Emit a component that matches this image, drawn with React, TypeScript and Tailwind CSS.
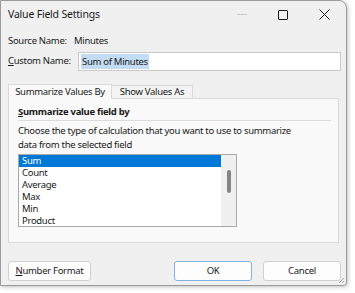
import React from 'react';

const font = { fontFamily: '"Segoe UI", "Noto Sans", sans-serif' };

export default function App() {
  const items = ['Sum', 'Count', 'Average', 'Max', 'Min', 'Product'];

  return (
    <div className="w-[355px] h-[293px] bg-white overflow-hidden text-[#1a1a1a] text-[9.5px] tracking-[-0.3px]" style={font}>
      <div className="w-[347px] h-[286px] bg-[#f0f0f0] border border-[#9a9a9a] rounded-tr-[8px] rounded-br-[4px] shadow-[1px_1px_4px_rgba(0,0,0,0.25)] flex flex-col relative">
        {/* title bar */}
        <div className="h-[27px] shrink-0 flex items-center pl-[7px]">
          <span className="text-[10.5px] tracking-[-0.2px]">Value Field Settings</span>
          <div className="ml-auto flex items-center h-full">
            <div className="w-[40px] flex justify-center">
              <div className="w-[10px] h-px bg-[#c8c8c8]" />
            </div>
            <div className="w-[42px] flex justify-center">
              <div className="w-[10px] h-[10px] border border-[#1a1a1a] rounded-[1px]" />
            </div>
            <div className="w-[42px] flex justify-center pr-[2px]">
              <svg width="11" height="11" viewBox="0 0 11 11">
                <path d="M0.5 0.5 L10.5 10.5 M10.5 0.5 L0.5 10.5" stroke="#1a1a1a" strokeWidth="1" />
              </svg>
            </div>
          </div>
        </div>

        {/* source name */}
        <div className="shrink-0 flex items-center h-[14px] mt-[6px] pl-[7px]">
          <span className="w-[66px] shrink-0">Source Name:</span>
          <span>Minutes</span>
        </div>

        {/* custom name */}
        <div className="shrink-0 flex items-center mt-[4px] pl-[7px] pr-[5px]">
          <span className="w-[70px] shrink-0">
            <span className="underline">C</span>ustom Name:
          </span>
          <div className="flex-1 h-[19px] bg-white border border-[#c8c8c8] flex items-center pl-[2px]">
            <span className="bg-[#c3dcf3] px-[1px] leading-[15px]">Sum of Minutes</span>
          </div>
        </div>

        {/* tabs */}
        <div className="shrink-0 mx-[7px] mt-[12px] flex items-end">
          <div className="h-[15px] w-[104px] bg-[#f9f9f9] border border-b-0 border-[#d9d9d9] flex items-center justify-center relative top-px z-10">
            Summarize Values By
          </div>
          <div className="h-[13px] w-[81px] bg-[#f3f3f3] border border-l-0 border-b-0 border-[#d9d9d9] flex items-center justify-center">
            Show Values As
          </div>
        </div>
        <div className="shrink-0 mx-[7px] h-[145px] bg-[#f9f9f9] border border-[#d9d9d9] pl-[9px] pr-[7px]">
          <div className="mt-[6px] font-bold leading-[14px]">
            <span className="underline">S</span>ummarize value field by
          </div>
          <div className="mt-[1px] h-px bg-[#dcdcdc]" />
          <div className="mt-[3px] leading-[14px]">
            Choose the type of calculation that you want to use to summarize
            <br />
            data from the selected field
          </div>
          <div className="mt-[2px] w-[219px] h-[73px] bg-white border border-[#a8a8a8] flex">
            <div className="flex-1 flex flex-col">
              {items.map((item, i) => (
                <div
                  key={item}
                  className={
                    i === 0
                      ? 'h-[12px] leading-[12px] pl-[3px] bg-[#0078d7] text-white'
                      : 'h-[12px] leading-[12px] pl-[3px]'
                  }
                >
                  {item}
                </div>
              ))}
            </div>
            <div className="w-[15px] bg-[#f0f0f0] flex justify-center pt-[15px]">
              <div className="w-[4px] h-[23px] bg-[#858585] rounded-[2px]" />
            </div>
          </div>
        </div>

        {/* buttons */}
        <div className="shrink-0 flex items-center mt-[18px] pl-[7px] pr-[5px]">
          <button className="w-[83px] h-[20px] bg-[#fdfdfd] border border-[#d0d0d0] rounded-[3px]">
            <span className="underline">N</span>umber Format
          </button>
          <button className="ml-auto w-[78px] h-[20px] bg-[#fdfdfd] border border-[#7fb3e3] rounded-[3px]">
            OK
          </button>
          <button className="ml-[11px] w-[78px] h-[20px] bg-[#fdfdfd] border border-[#d0d0d0] rounded-[3px]">
            Cancel
          </button>
        </div>

        <svg className="absolute right-[1px] bottom-[1px]" width="8" height="8" viewBox="0 0 8 8">
          <path d="M7 2 L2 7 M7 5 L5 7" stroke="#a8a8a8" strokeWidth="1" />
        </svg>
      </div>
    </div>
  );
}
